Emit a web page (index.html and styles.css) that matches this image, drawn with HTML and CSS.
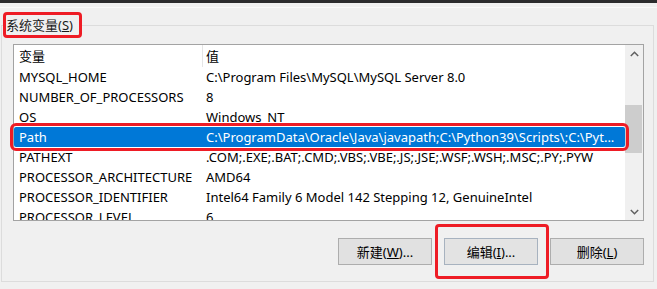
FILE: index.html
```html
<!DOCTYPE html>
<html lang="zh-CN">
<head>
  <meta charset="UTF-8">
  <meta name="viewport" content="width=device-width, initial-scale=1.0">
  <title>系统变量</title>
  <link rel="stylesheet" href="styles.css">
</head>
<body>
  <div class="titlebar"></div>
  <div class="sep"></div>

  <fieldset class="group">
    <legend class="group-label">系统变量(<u>S</u>)</legend>

    <div class="listbox">
      <div class="list">
        <div class="row head">
          <span class="name">变量</span>
          <span class="value">值</span>
        </div>
        <div class="row"><span class="name">MYSQL_HOME</span><span class="value">C:\Program Files\MySQL\MySQL Server 8.0</span></div>
        <div class="row"><span class="name">NUMBER_OF_PROCESSORS</span><span class="value">8</span></div>
        <div class="row"><span class="name">OS</span><span class="value">Windows_NT</span></div>
        <div class="row selected"><span class="name">Path</span><span class="value">C:\ProgramData\Oracle\Java\javapath;C:\Python39\Scripts\;C:\Pyt...</span></div>
        <div class="row"><span class="name">PATHEXT</span><span class="value">.COM;.EXE;.BAT;.CMD;.VBS;.VBE;.JS;.JSE;.WSF;.WSH;.MSC;.PY;.PYW</span></div>
        <div class="row"><span class="name">PROCESSOR_ARCHITECTURE</span><span class="value">AMD64</span></div>
        <div class="row"><span class="name">PROCESSOR_IDENTIFIER</span><span class="value">Intel64 Family 6 Model 142 Stepping 12, GenuineIntel</span></div>
        <div class="row"><span class="name">PROCESSOR_LEVEL</span><span class="value">6</span></div>
      </div>

      <div class="scrollbar">
        <div class="arrow">
          <svg width="9" height="6" viewBox="0 0 9 6"><polyline points="0.8,5 4.5,1.3 8.2,5" /></svg>
        </div>
        <div class="track"><div class="thumb"></div></div>
        <div class="arrow">
          <svg width="9" height="6" viewBox="0 0 9 6"><polyline points="0.8,1 4.5,4.7 8.2,1" /></svg>
        </div>
      </div>
    </div>

    <div class="buttons">
      <button class="btn">新建(<u>W</u>)...</button>
      <span class="btn-mark"><button class="btn focused">编辑(<u>I</u>)...</button></span>
      <button class="btn">删除(<u>L</u>)</button>
    </div>
  </fieldset>
</body>
</html>
```

FILE: styles.css
```css
body {
  margin: 0;
  background-color: #f0f0f0;
  font-family: "Noto Sans", "Noto Sans CJK SC", sans-serif;
  font-size: 13px;
  color: #000;
  height: 289px;
  overflow: hidden;
}

.titlebar {
  height: 3px;
  background-color: #2b2b2d;
}

.sep {
  height: 4px;
  border-bottom: 1px solid #f9f9f9;
}

/* group box */
.group {
  box-sizing: border-box;
  width: 652px;
  margin: 4px 0 0 1px;
  padding: 6px 9px 16px 11px;
  border: 1px solid #dcdcdc;
  border-radius: 0;
}

.group-label {
  box-sizing: border-box;
  height: 26px;
  margin-left: -10px;
  padding: 0 6px 0 0;
  border: 3px solid #ee1c25;
  border-radius: 4px;
  font-size: 13px;
  line-height: 20px;
  color: #1a1a1a;
}

/* list view */
.listbox {
  display: flex;
  width: 631px;
  height: 177px;
  box-sizing: border-box;
  border: 1px solid #a3a3a3;
  background-color: #fff;
}

.list {
  flex: 1;
  overflow-x: visible;
  overflow-y: clip;
}

.row {
  display: grid;
  grid-template-columns: 188px 1fr;
  height: 20px;
  line-height: 20px;
  white-space: nowrap;
}

.row .name {
  padding-left: 5px;
  overflow: hidden;
}

.row .value {
  padding-left: 4px;
  overflow: hidden;
}

.row.head {
  height: 22px;
  line-height: 22px;
}

.row.head .value {
  border-left: 1px solid #e5e5e5;
  padding-left: 3px;
}

.row.selected {
  position: relative;
  z-index: 1;
  background-color: #0078d7;
  color: #fff;
  outline: 3px solid #ee1c25;
  outline-offset: 1px;
  border-radius: 2px;
}

.scrollbar {
  width: 18px;
  display: flex;
  flex-direction: column;
  background-color: #f0f0f0;
}

.arrow {
  height: 17px;
  display: flex;
  align-items: center;
  justify-content: center;
}

.arrow svg polyline {
  fill: none;
  stroke: #606060;
  stroke-width: 1.5;
}

.track {
  flex: 1;
}

.thumb {
  margin: 43px 1px 0 0;
  height: 48px;
  background-color: #cdcdcd;
}

/* buttons */
.buttons {
  display: flex;
  justify-content: flex-end;
  gap: 12px;
  margin-top: 17px;
  margin-right: 0;
}

.btn {
  width: 94px;
  height: 27px;
  padding: 0;
  border: 1px solid #adadad;
  background-color: #e1e1e1;
  font-family: "Noto Sans", "Noto Sans CJK SC", sans-serif;
  font-size: 13px;
  color: #000;
}

.btn.focused {
  border-color: #a7b2bf;
  background-color: #e3e3e3;
}

.btn-mark {
  display: block;
  margin: -14px -11px -14px -9px;
  padding: 11px 8px 11px 6px;
  border: 3px solid #ee1c25;
  border-radius: 4px;
}

.btn-mark .btn {
  display: block;
}
```
